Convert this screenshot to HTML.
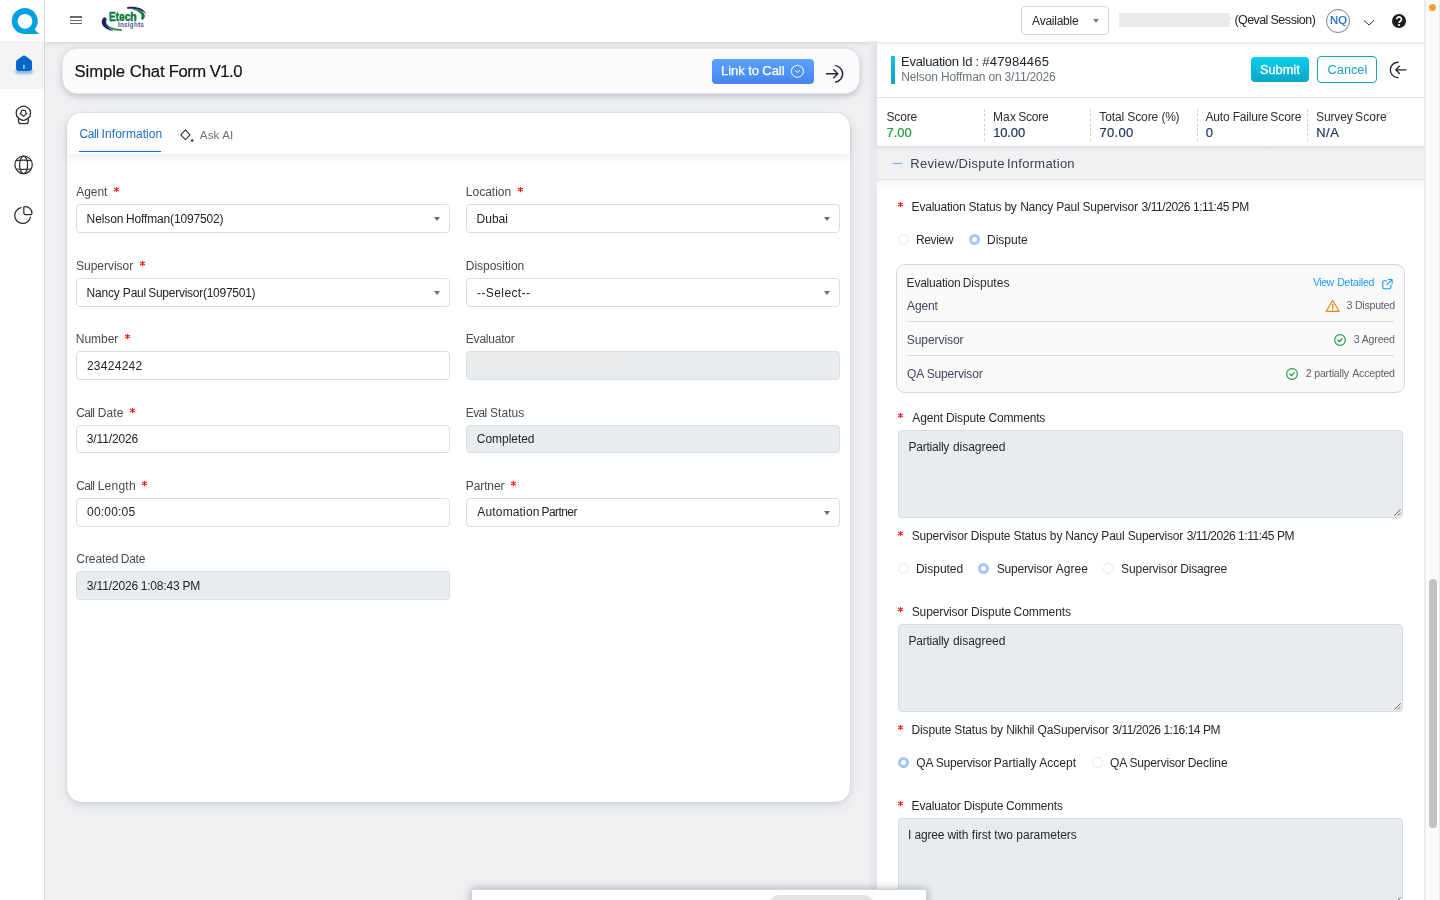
<!DOCTYPE html>
<html lang="en">
<head>
<meta charset="utf-8">
<title>Simple Chat Form V1.0</title>
<style>
*{box-sizing:border-box;margin:0;padding:0}
html,body{width:1440px;height:900px;overflow:hidden}
body{position:relative;background:#eff0f2;font-family:"Liberation Sans",sans-serif;font-size:12px;color:#212529}
.a{position:absolute}
svg{position:absolute;overflow:visible}
.t{position:absolute;white-space:nowrap}
/* sidebar */
#side{left:0;top:0;width:45px;height:900px;background:#fff;border-right:1px solid #d3d9e0}
#side .act{left:0;top:41px;width:44px;height:48.4px;background:#f4f4f5}
/* header */
#hdr{left:45px;top:0;width:1379px;height:42px;background:#fff;box-shadow:0 1px 5px rgba(60,70,90,.20)}
/* scrollbar */
#sb{left:1424px;top:0;width:16px;height:900px;background:#fafafa;border-left:2px solid #ebebeb;border-right:1px solid #ececec}
#sb .th{left:3px;top:579px;width:8px;height:249px;border-radius:4px;background:#c1c1c1}
/* left */
#title{left:62px;top:48px;width:798px;height:46px;background:#fcfcfd;border:1px solid #e4e8ed;border-radius:15px;box-shadow:0 2px 5px rgba(60,70,80,.20),0 4px 12px rgba(60,70,80,.07)}
#card{left:67px;top:113px;width:783px;height:689px;background:#fff;border-radius:15px;box-shadow:0 0 0 1px rgba(200,210,220,.35),0 2px 5px rgba(60,70,80,.10),0 4px 14px rgba(60,70,80,.07)}
#tabs{left:0;top:0;width:783px;height:40.5px;background:#fff;border-radius:15px 15px 0 0;box-shadow:0 5px 9px rgba(60,70,90,.075)}
.box{position:absolute;height:28.6px;width:374px;border:1px solid #d9dee4;border-radius:4px;background:#fff}
.box.dis{background:#e9ecef}
.car{position:absolute;width:0;height:0;border-left:3px solid transparent;border-right:3px solid transparent;border-top:4px solid #6c6c6c}
/* right */
#gut{left:867.5px;top:41px;width:9.5px;height:859px;background:linear-gradient(to right,rgba(232,234,238,0),#e8eaee 28%,#e6e8ec)}
#rp{left:877px;top:41px;width:547px;height:859px;background:#fff}
#rph{left:877px;top:41px;width:547px;height:105px;background:#fff;box-shadow:0 3px 6px rgba(60,70,90,.10)}
#sec{left:877px;top:146px;width:547px;height:33.5px;background:#f0f1f3;border-bottom:1px solid #dfe3e8}
.ta{position:absolute;left:898px;width:505px;background:#e9ecef;border:1px solid #d6dbe0;border-radius:4px}
.rad{position:absolute;width:11px;height:11px;border-radius:50%;border:1px solid #e5e9f1;background:#fff}
.rad.on{border:3px solid #a3c6f8;background:#fff}
.hl{position:absolute;left:907px;width:487px;height:1px;background:#d9dce3}
.vd{position:absolute;top:109px;width:0;height:32px;border-left:1px dashed #cfd6de}
</style>
</head>
<body>
<!-- base panels -->
<div id="hdr" class="a"></div>
<div id="side" class="a"><div class="act a"></div></div>
<div id="title" class="a"></div>
<div id="card" class="a"><div id="tabs" class="a"></div></div>
<div id="gut" class="a"></div>
<div id="rp" class="a"></div>

<!-- sidebar icons -->
<svg style="left:0;top:0" width="45" height="240" viewBox="0 0 45 240">
  <!-- Q logo -->
  <path fill="#00a0e4" fill-rule="evenodd" d="M24.8 8 a13 13 0 1 0 0 26 H39 L34.6 29.4 A13 13 0 0 0 24.8 8 Z M25 13.9 a7.4 7.4 0 1 1 0 14.8 a7.4 7.4 0 1 1 0 -14.8 Z"/>
  <!-- home -->
  <defs><filter id="hs" x="-50%" y="-50%" width="200%" height="200%"><feGaussianBlur stdDeviation="1.6"/></filter></defs>
  <rect x="15" y="69.5" width="18" height="4" rx="2" fill="#0566c9" opacity=".5" filter="url(#hs)"/>
  <path fill="#0566c9" d="M21.9 56.4 a3.4 3.4 0 0 1 4.2 0 l4.9 3.7 a2.6 2.6 0 0 1 1 2.1 v6.1 a2.7 2.7 0 0 1 -2.7 2.7 h-10.6 a2.7 2.7 0 0 1 -2.7 -2.7 v-6.1 a2.6 2.6 0 0 1 1 -2.1 Z"/>
  <rect x="23.05" y="64.8" width="1.65" height="4" rx=".5" fill="#a9cdf2"/>
  <!-- agent / badge icon -->
  <g fill="none" stroke="#2d2d2d" stroke-width="1.3" stroke-linejoin="round" stroke-linecap="round">
    <path d="M20.90 106.78 Q23.40 105.30 25.90 106.78 L28.00 108.02 Q30.50 109.50 30.50 112.40 L30.50 114.10 Q30.50 117.00 27.97 118.42 L25.93 119.58 Q23.40 121.00 20.87 119.58 L18.83 118.42 Q16.30 117.00 16.30 114.10 L16.30 112.40 Q16.30 109.50 18.80 108.02 Z"/>
    <path d="M18.5 118.8 v2.5 a2.3 2.3 0 0 0 2.3 2.3 h5.2 a2.3 2.3 0 0 0 2.3 -2.3 v-2.5"/>
    <path d="M21.6 110.4 h3.6 l.5 2.3 l1.1 .9 l-3.4 2.7 l-3.4 -2.7 l1.1 -.9 Z" stroke-width="1.15"/>
  </g>
  <!-- globe -->
  <g fill="none" stroke="#2d2d2d" stroke-width="1.25">
    <circle cx="23.6" cy="164.8" r="8.7"/>
    <ellipse cx="23.6" cy="164.8" rx="4" ry="8.7"/>
    <path d="M15.9 160.6 Q23.6 159.8 31.3 160.6 M15.9 169 Q23.6 169.8 31.3 169"/>
  </g>
  <!-- pie -->
  <g fill="none" stroke="#2d2d2d" stroke-width="1.25" stroke-linecap="round" stroke-linejoin="round">
    <path d="M21.2 207.6 A8 8 0 1 0 30.5 217.2"/>
    <path d="M24.7 206.6 a6.6 6.6 0 0 1 7.2 7.2 a.9 .9 0 0 1 -.9 .8 h-5 a2.2 2.2 0 0 1 -2.2 -2.2 v-5 a.9 .9 0 0 1 .9 -.8 Z"/>
  </g>
</svg>

<!-- header: hamburger + logo -->
<div class="a" style="left:69.7px;top:16.3px;width:12.6px;height:1.4px;background:#6a6a6a"></div>
<div class="a" style="left:69.7px;top:19.5px;width:12.6px;height:1.4px;background:#6a6a6a"></div>
<div class="a" style="left:69.7px;top:22.7px;width:12.6px;height:1.4px;background:#6a6a6a"></div>
<svg style="left:96px;top:0" width="60" height="40" viewBox="0 0 60 40">
  <path d="M30.9 7.2 C38.6 5.9 48.6 7.8 50.1 14.6 C47.9 11 42 8.4 31.5 8.9 Z" fill="#231f63"/>
  <path d="M35.4 9 C43 8.9 48.4 11.6 48.8 15.6 C48.9 17.6 48 19 46.8 20 L44.8 18.5 C46.6 15.8 45.8 11.6 35.4 9 Z" fill="#0f7d3c"/>
  <path d="M8.3 17.1 L10.9 19.1 C8.6 22.6 10.8 28 17.6 30.8 C9.4 30.4 3.6 24.6 6.4 19 Z" fill="#231f63"/>
  <path d="M10.7 21.8 C10.7 26.4 17.4 29.2 25.7 28.9 L25.9 30.8 C16.6 31.2 9.4 27.6 10.7 21.8 Z" fill="#1c8a48"/>
</svg>
<span class="t" style="left:108.9px;top:8.7px;font-size:13.3px;line-height:16px;font-weight:bold;color:#0a7836;-webkit-text-stroke:.55px #0a7836;transform-origin:0 0;transform:scaleX(.765);will-change:transform">Etech</span>
<span class="t" style="left:117.8px;top:20.3px;font-size:7.5px;line-height:9px;font-weight:bold;color:#4d4d8e;letter-spacing:.3px;transform-origin:0 0;transform:scaleX(.84);will-change:transform">Insights</span>

<!-- header right -->
<div class="a" style="left:1021px;top:6px;width:87.5px;height:28.5px;border:1px solid #d3d9e0;border-radius:4px;background:#fff"></div>
<i class="car" style="left:1092.8px;top:19px;border-top-color:#808080"></i>
<div class="a" style="left:1118.5px;top:13px;width:111px;height:14px;background:#ebebeb"></div>
<div class="a" style="left:1229.6px;top:17.6px;width:1.6px;height:1.4px;background:#777;border-radius:0 1px 0 0;opacity:.55"></div>
<div class="a" style="left:1325.8px;top:8.8px;width:24px;height:24px;border-radius:50%;border:1px solid #7d7d7d;background:#fff"></div>
<svg style="left:1362px;top:17px" width="14" height="10" viewBox="0 0 14 10"><path d="M2.3 3.7 L7 8 L11.7 3.7" fill="none" stroke="#333" stroke-width="1" stroke-linecap="round" stroke-linejoin="round"/></svg>
<svg style="left:1391px;top:13px" width="16" height="16" viewBox="0 0 16 16"><circle cx="8" cy="8" r="7" fill="#1e1e1e"/><path d="M5.7 6.3 a2.35 2.35 0 1 1 3.6 2 c-.8 .5 -1.2 .9 -1.2 1.7" fill="none" stroke="#fff" stroke-width="1.7"/><circle cx="8.05" cy="12" r="1.05" fill="#fff"/></svg>

<!-- title bar widgets -->
<div class="a" style="left:712px;top:59.2px;width:102px;height:24.6px;border-radius:4px;background:linear-gradient(#5ca2ff,#4285ee)"></div>
<svg style="left:790px;top:64.3px" width="15" height="15" viewBox="0 0 15 15" fill="none" stroke="#fff" stroke-width="1"><circle cx="7.4" cy="7.3" r="6"/><path d="M5.2 6.5 L7.4 8.6 L9.6 6.5" stroke-linecap="round" stroke-linejoin="round"/></svg>
<svg style="left:825px;top:63px" width="21" height="21" viewBox="0 0 21 21" fill="none" stroke="#1d2433" stroke-width="1.45" stroke-linecap="round" stroke-linejoin="round"><path d="M1.6 10.8 H12.6 M8.8 6.8 L12.8 10.8 L8.8 14.8"/><path d="M10.6 2.6 A8.3 8.3 0 0 1 10.6 19"/></svg>

<!-- tabs -->
<div class="a" style="left:79px;top:150.6px;width:82px;height:1.6px;background:#1a6dd1"></div>
<svg style="left:178px;top:127px" width="18" height="17" viewBox="0 0 18 17"><path d="M7.4 2.9 L12 7.8 L7.4 12.7 L2.8 7.8 Z" fill="none" stroke="#333" stroke-width="1.1" stroke-linejoin="round"/><path d="M14.1 11.9 L15.8 13.6 L14.1 15.3 L12.4 13.6 Z" fill="#3a3a3a"/></svg>

<!-- form boxes -->
<div class="box" style="left:76px;top:204px"></div><i class="car" style="left:434px;top:216.8px"></i>
<div class="box" style="left:76px;top:278px"></div><i class="car" style="left:434px;top:290.8px"></i>
<div class="box" style="left:76px;top:351.3px"></div>
<div class="box" style="left:76px;top:424.8px"></div>
<div class="box" style="left:76px;top:498px"></div>
<div class="box dis" style="left:76px;top:571.3px"></div>
<div class="box" style="left:466px;top:204px"></div><i class="car" style="left:824px;top:216.8px"></i>
<div class="box" style="left:466px;top:278px"></div><i class="car" style="left:824px;top:290.8px"></i>
<div class="box dis" style="left:466px;top:351.3px"></div>
<div class="box dis" style="left:466px;top:424.8px"></div>
<div class="box" style="left:466px;top:498px"></div><i class="car" style="left:824px;top:510.8px"></i>
<div class="a" style="left:473.7px;top:354.5px;width:154.5px;height:16.8px;background:#ebebeb"></div>

<!-- right panel header -->
<div id="rph" class="a"></div>
<div class="a" style="left:877px;top:42px;width:547px;height:5px;background:linear-gradient(rgba(60,70,90,.13),rgba(60,70,90,.04) 55%,rgba(60,70,90,0))"></div>
<div class="a" style="left:877px;top:97px;width:547px;height:1px;background:#dde2e8"></div>
<div class="a" style="left:890.8px;top:55.8px;width:4.3px;height:28px;background:linear-gradient(#05c8ea,#129fbd)"></div>
<div class="a" style="left:1251px;top:57px;width:57.5px;height:24.8px;border-radius:4px;background:linear-gradient(#03d0f0,#0aa6c6)"></div>
<div class="a" style="left:1317px;top:56.4px;width:59.6px;height:26.2px;border-radius:4px;border:1px solid #17a2c4;background:#fff"></div>
<svg style="left:1387.8px;top:59.9px" width="20.4" height="20.4" viewBox="0 0 22 22" fill="none" stroke="#1d2433" stroke-width="1.45" stroke-linecap="round" stroke-linejoin="round"><path d="M19.4 10.6 H8.6 M12.4 6.8 L8.4 10.6 L12.4 14.6"/><path d="M10.8 2.4 A8.3 8.3 0 0 0 10.8 19"/></svg>
<i class="vd" style="left:984.2px"></i><i class="vd" style="left:1090.3px"></i><i class="vd" style="left:1197.3px"></i><i class="vd" style="left:1307.2px"></i>
<div id="sec" class="a"></div>
<div class="a" style="left:877px;top:146px;width:547px;height:5px;background:linear-gradient(rgba(60,70,90,.11),rgba(60,70,90,.03) 60%,rgba(60,70,90,0))"></div>
<div class="a" style="left:892.5px;top:162.6px;width:9px;height:1.5px;background:#6aa5fd"></div>
<div class="a" style="left:877px;top:180px;width:547px;height:14px;background:linear-gradient(rgba(60,70,90,.05),rgba(60,70,90,0))"></div>

<!-- right panel body shapes -->
<i class="rad" style="left:898px;top:234.3px"></i><i class="rad on" style="left:969px;top:234.3px"></i>
<div class="a" style="left:896px;top:264px;width:509px;height:128.6px;border:1px solid #d3d7de;border-radius:9px;background:#fafafb"></div>
<i class="hl" style="top:321px"></i><i class="hl" style="top:355px"></i>
<svg style="left:1380.9px;top:277.5px" width="12.6" height="12.6" viewBox="0 0 14 14" fill="none" stroke="#1a9cf0" stroke-width="1.25" stroke-linecap="round" stroke-linejoin="round"><path d="M6.2 3 H3.6 A1.6 1.6 0 0 0 2 4.6 V10.4 A1.6 1.6 0 0 0 3.6 12 H9.4 A1.6 1.6 0 0 0 11 10.4 V7.8"/><path d="M8.2 1.6 H12.4 V5.8 M12.2 1.8 L6.6 7.4"/></svg>
<svg style="left:1325px;top:299px" width="16" height="14" viewBox="0 0 16 14" fill="none" stroke="#e08a1a" stroke-width="1.1" stroke-linejoin="round" stroke-linecap="round"><path d="M7.7 1.4 L14.2 12.4 H1.2 Z"/><path d="M7.7 5.4 V9 M7.7 10.6 V10.7" stroke-width="1.35"/></svg>
<svg style="left:1333px;top:333.4px" width="14" height="14" viewBox="0 0 14 14" fill="none" stroke="#1f9d45" stroke-width="1.15" stroke-linecap="round" stroke-linejoin="round"><circle cx="7" cy="7" r="5.35"/><path d="M4.9 7.2 L6.4 8.6 L9.1 5.8" stroke-width="1.3"/></svg>
<svg style="left:1284.6px;top:367.2px" width="14" height="14" viewBox="0 0 14 14" fill="none" stroke="#1f9d45" stroke-width="1.15" stroke-linecap="round" stroke-linejoin="round"><circle cx="7" cy="7" r="5.35"/><path d="M4.9 7.2 L6.4 8.6 L9.1 5.8" stroke-width="1.3"/></svg>
<div class="ta" style="top:430px;height:87.5px"></div>
<div class="ta" style="top:624.2px;height:87.5px"></div>
<div class="ta" style="top:818.2px;height:87.5px"></div>
<svg style="left:1390px;top:505px" width="12" height="12" viewBox="0 0 12 12" stroke="#555" stroke-width=".9"><path d="M4.4 10.6 L10.6 4.4 M7.7 10.6 L10.6 7.7"/></svg>
<svg style="left:1390px;top:699.2px" width="12" height="12" viewBox="0 0 12 12" stroke="#555" stroke-width=".9"><path d="M4.4 10.6 L10.6 4.4 M7.7 10.6 L10.6 7.7"/></svg>
<svg style="left:1390px;top:893.2px" width="12" height="12" viewBox="0 0 12 12" stroke="#555" stroke-width=".9"><path d="M4.4 10.6 L10.6 4.4 M7.7 10.6 L10.6 7.7"/></svg>
<i class="rad" style="left:898px;top:563.3px"></i><i class="rad on" style="left:978px;top:563.3px"></i><i class="rad" style="left:1103px;top:563.3px"></i>
<i class="rad on" style="left:898px;top:757px"></i><i class="rad" style="left:1092px;top:757px"></i>

<!-- bottom popup fragment -->
<div class="a" style="left:471px;top:888.6px;width:455.6px;height:20px;background:#fff;border:1px solid #d9cfdb;border-bottom:0;box-shadow:0 0 9px rgba(40,40,60,.35)"></div>
<div class="a" style="left:769.4px;top:894.7px;width:104.6px;height:30px;border-radius:10px;background:#e4e4e4"></div>

<!-- texts -->
<div class="a" style="left:0;top:0;width:1440px;height:900px;will-change:transform">
<span class="t" style="left:1032.10px;top:12.50px;font-size:12px;line-height:17px;height:17px;color:#212529;letter-spacing:-0.247px;">Available</span>
<span class="t" style="left:1234.44px;top:11.00px;font-size:12.5px;line-height:18px;height:18px;color:#212529;letter-spacing:-0.582px;">(Qeval</span>
<span class="t" style="left:1270.44px;top:11.00px;font-size:12.5px;line-height:18px;height:18px;color:#212529;letter-spacing:-0.437px;">Session)</span>
<span class="t" style="left:1329.88px;top:12.00px;font-size:11.3px;line-height:16px;height:16px;color:#0f64cc;letter-spacing:0.138px;-webkit-text-stroke:.15px #0f64cc">NQ</span>
<span class="t" style="left:74.41px;top:60.00px;font-size:16.7px;line-height:23px;height:23px;color:#0f1216;letter-spacing:-0.058px;-webkit-text-stroke:.2px #0f1216">Simple Chat</span>
<span class="t" style="left:168.74px;top:60.00px;font-size:16.7px;line-height:23px;height:23px;color:#0f1216;letter-spacing:-0.518px;-webkit-text-stroke:.2px #0f1216">Form V1.0</span>
<span class="t" style="left:721.08px;top:61.50px;font-size:13px;line-height:18px;height:18px;color:#fff;letter-spacing:-0.049px;-webkit-text-stroke:.25px #fff">Link to</span>
<span class="t" style="left:762.32px;top:61.50px;font-size:13px;line-height:18px;height:18px;color:#fff;letter-spacing:-0.037px;-webkit-text-stroke:.25px #fff">Call</span>
<span class="t" style="left:79.56px;top:125.50px;font-size:12px;line-height:17px;height:17px;color:#1a6dd1;letter-spacing:-0.441px;">Call</span>
<span class="t" style="left:101.62px;top:125.50px;font-size:12px;line-height:17px;height:17px;color:#1a6dd1;letter-spacing:0.058px;">Information</span>
<span class="t" style="left:199.78px;top:127.00px;font-size:11.6px;line-height:16px;height:16px;color:#6b7082;letter-spacing:0.140px;">Ask AI</span>
<span class="t" style="left:76.36px;top:183.50px;font-size:12px;line-height:17px;height:17px;color:#46494e;letter-spacing:-0.090px;">Agent</span>
<span class="t" style="left:86.61px;top:210.50px;font-size:12px;line-height:17px;height:17px;color:#212529;letter-spacing:-0.083px;">Nelson</span>
<span class="t" style="left:126.05px;top:210.50px;font-size:12px;line-height:17px;height:17px;color:#212529;letter-spacing:-0.159px;">Hoffman(1097502)</span>
<span class="t" style="left:76.11px;top:257.50px;font-size:12px;line-height:17px;height:17px;color:#46494e;letter-spacing:-0.029px;">Supervisor</span>
<span class="t" style="left:86.61px;top:284.50px;font-size:12px;line-height:17px;height:17px;color:#212529;letter-spacing:-0.190px;">Nancy Paul</span>
<span class="t" style="left:148.19px;top:284.50px;font-size:12px;line-height:17px;height:17px;color:#212529;letter-spacing:-0.261px;">Supervisor(1097501)</span>
<span class="t" style="left:75.83px;top:330.50px;font-size:12px;line-height:17px;height:17px;color:#46494e;letter-spacing:-0.049px;">Number</span>
<span class="t" style="left:86.88px;top:357.50px;font-size:12px;line-height:17px;height:17px;color:#212529;letter-spacing:0.284px;">23424242</span>
<span class="t" style="left:76.36px;top:404.50px;font-size:12px;line-height:17px;height:17px;color:#46494e;letter-spacing:-0.669px;">Call</span>
<span class="t" style="left:97.70px;top:404.50px;font-size:12px;line-height:17px;height:17px;color:#46494e;letter-spacing:0.145px;">Date</span>
<span class="t" style="left:86.83px;top:430.50px;font-size:12px;line-height:17px;height:17px;color:#212529;letter-spacing:-0.132px;">3/11/2026</span>
<span class="t" style="left:76.36px;top:477.50px;font-size:12px;line-height:17px;height:17px;color:#46494e;letter-spacing:-0.669px;">Call</span>
<span class="t" style="left:97.70px;top:477.50px;font-size:12px;line-height:17px;height:17px;color:#46494e;letter-spacing:0.234px;">Length</span>
<span class="t" style="left:87.06px;top:503.50px;font-size:12px;line-height:17px;height:17px;color:#212529;letter-spacing:0.188px;">00:00:05</span>
<span class="t" style="left:76.36px;top:550.50px;font-size:12px;line-height:17px;height:17px;color:#46494e;letter-spacing:-0.096px;">Created</span>
<span class="t" style="left:120.70px;top:550.50px;font-size:12px;line-height:17px;height:17px;color:#46494e;letter-spacing:-0.204px;">Date</span>
<span class="t" style="left:86.83px;top:577.50px;font-size:12px;line-height:17px;height:17px;color:#212529;letter-spacing:-0.132px;">3/11/2026</span>
<span class="t" style="left:140.74px;top:577.50px;font-size:12px;line-height:17px;height:17px;color:#212529;letter-spacing:-0.194px;">1:08:43 PM</span>
<span class="t" style="left:465.83px;top:183.50px;font-size:12px;line-height:17px;height:17px;color:#46494e;">Location</span>
<span class="t" style="left:476.61px;top:210.50px;font-size:12px;line-height:17px;height:17px;color:#212529;letter-spacing:-0.027px;">Dubai</span>
<span class="t" style="left:465.83px;top:257.50px;font-size:12px;line-height:17px;height:17px;color:#46494e;letter-spacing:-0.033px;">Disposition</span>
<span class="t" style="left:477.06px;top:284.50px;font-size:12px;line-height:17px;height:17px;color:#212529;letter-spacing:0.399px;">--Select--</span>
<span class="t" style="left:465.83px;top:330.50px;font-size:12px;line-height:17px;height:17px;color:#46494e;letter-spacing:-0.220px;">Evaluator</span>
<span class="t" style="left:465.83px;top:404.50px;font-size:12px;line-height:17px;height:17px;color:#46494e;letter-spacing:-0.685px;">Eval</span>
<span class="t" style="left:490.10px;top:404.50px;font-size:12px;line-height:17px;height:17px;color:#46494e;letter-spacing:0.019px;">Status</span>
<span class="t" style="left:476.85px;top:430.50px;font-size:12px;line-height:17px;height:17px;color:#212529;letter-spacing:-0.044px;">Completed</span>
<span class="t" style="left:465.83px;top:477.50px;font-size:12px;line-height:17px;height:17px;color:#46494e;letter-spacing:-0.120px;">Partner</span>
<span class="t" style="left:477.34px;top:503.50px;font-size:12px;line-height:17px;height:17px;color:#212529;letter-spacing:0.155px;">Automation</span>
<span class="t" style="left:541.62px;top:503.50px;font-size:12px;line-height:17px;height:17px;color:#212529;letter-spacing:-0.597px;">Partner</span>
<span class="t" style="left:901.08px;top:52.50px;font-size:13px;line-height:18px;height:18px;color:#20242c;letter-spacing:-0.308px;">Evaluation Id :</span>
<span class="t" style="left:982.32px;top:52.50px;font-size:13px;line-height:18px;height:18px;color:#20242c;letter-spacing:0.187px;">#47984465</span>
<span class="t" style="left:901.24px;top:68.50px;font-size:12px;line-height:17px;height:17px;color:#6b7280;letter-spacing:-0.131px;">Nelson Hoffman on</span>
<span class="t" style="left:1004.61px;top:68.50px;font-size:12px;line-height:17px;height:17px;color:#6b7280;letter-spacing:-0.167px;">3/11/2026</span>
<span class="t" style="left:1260.04px;top:60.50px;font-size:12.8px;line-height:18px;height:18px;color:#fff;letter-spacing:-0.032px;-webkit-text-stroke:.32px #fff">Submit</span>
<span class="t" style="left:1327.62px;top:60.50px;font-size:12.8px;line-height:18px;height:18px;color:#17a2c4;letter-spacing:-0.033px;">Cancel</span>
<span class="t" style="left:886.47px;top:108.50px;font-size:12px;line-height:17px;height:17px;color:#2b2f36;letter-spacing:-0.151px;">Score</span>
<span class="t" style="left:886.61px;top:123.50px;font-size:13px;line-height:18px;height:18px;color:#1b9e3e;letter-spacing:-0.041px;-webkit-text-stroke:.18px #1b9e3e">7.00</span>
<span class="t" style="left:992.98px;top:108.50px;font-size:12px;line-height:17px;height:17px;color:#2b2f36;letter-spacing:0.155px;">Max</span>
<span class="t" style="left:1018.19px;top:108.50px;font-size:12px;line-height:17px;height:17px;color:#2b2f36;letter-spacing:-0.229px;">Score</span>
<span class="t" style="left:993.19px;top:123.50px;font-size:13px;line-height:18px;height:18px;color:#1d3461;letter-spacing:-0.150px;-webkit-text-stroke:.18px #1d3461">10.00</span>
<span class="t" style="left:1099.36px;top:108.50px;font-size:12px;line-height:17px;height:17px;color:#2b2f36;letter-spacing:-0.120px;">Total Score</span>
<span class="t" style="left:1161.40px;top:108.50px;font-size:12px;line-height:17px;height:17px;color:#2b2f36;letter-spacing:-0.237px;">(%)</span>
<span class="t" style="left:1099.52px;top:123.50px;font-size:13px;line-height:18px;height:18px;color:#1d3461;letter-spacing:0.316px;-webkit-text-stroke:.18px #1d3461">70.00</span>
<span class="t" style="left:1205.56px;top:108.50px;font-size:12px;line-height:17px;height:17px;color:#2b2f36;letter-spacing:-0.186px;">Auto Failure</span>
<span class="t" style="left:1270.28px;top:108.50px;font-size:12px;line-height:17px;height:17px;color:#2b2f36;letter-spacing:-0.066px;">Score</span>
<span class="t" style="left:1205.82px;top:123.50px;font-size:13px;line-height:18px;height:18px;color:#1d3461;-webkit-text-stroke:.18px #1d3461">0</span>
<span class="t" style="left:1316.12px;top:108.50px;font-size:12px;line-height:17px;height:17px;color:#2b2f36;letter-spacing:-0.160px;">Survey</span>
<span class="t" style="left:1355.12px;top:108.50px;font-size:12px;line-height:17px;height:17px;color:#2b2f36;letter-spacing:0.053px;">Score</span>
<span class="t" style="left:1316.14px;top:123.50px;font-size:13px;line-height:18px;height:18px;color:#1d3461;letter-spacing:0.548px;-webkit-text-stroke:.18px #1d3461">N/A</span>
<span class="t" style="left:910.31px;top:154.50px;font-size:13px;line-height:18px;height:18px;color:#3a3f55;letter-spacing:0.290px;">Review/Dispute</span>
<span class="t" style="left:1007.01px;top:154.50px;font-size:13px;line-height:18px;height:18px;color:#3a3f55;letter-spacing:0.257px;">Information</span>
<span class="t" style="left:911.61px;top:198.50px;font-size:12px;line-height:17px;height:17px;color:#24282f;letter-spacing:-0.219px;">Evaluation Status by</span>
<span class="t" style="left:1020.14px;top:198.50px;font-size:12px;line-height:17px;height:17px;color:#24282f;letter-spacing:-0.206px;">Nancy Paul Supervisor</span>
<span class="t" style="left:1141.61px;top:198.50px;font-size:12px;line-height:17px;height:17px;color:#24282f;letter-spacing:-0.450px;">3/11/2026 1:11:45 PM</span>
<span class="t" style="left:915.98px;top:231.50px;font-size:12px;line-height:17px;height:17px;color:#24282f;letter-spacing:-0.358px;">Review</span>
<span class="t" style="left:987.05px;top:231.50px;font-size:12px;line-height:17px;height:17px;color:#24282f;letter-spacing:-0.016px;">Dispute</span>
<span class="t" style="left:906.61px;top:274.50px;font-size:12px;line-height:17px;height:17px;color:#2a2e3a;letter-spacing:-0.228px;">Evaluation</span>
<span class="t" style="left:962.70px;top:274.50px;font-size:12px;line-height:17px;height:17px;color:#2a2e3a;">Disputes</span>
<span class="t" style="left:907.10px;top:297.50px;font-size:12px;line-height:17px;height:17px;color:#40455e;letter-spacing:-0.147px;">Agent</span>
<span class="t" style="left:906.69px;top:331.50px;font-size:12px;line-height:17px;height:17px;color:#40455e;letter-spacing:-0.050px;">Supervisor</span>
<span class="t" style="left:907.06px;top:365.50px;font-size:12px;line-height:17px;height:17px;color:#40455e;letter-spacing:-0.140px;">QA Supervisor</span>
<span class="t" style="left:1312.99px;top:274.50px;font-size:10.6px;line-height:15px;height:15px;color:#1a9cf0;letter-spacing:-0.499px;">View</span>
<span class="t" style="left:1337.15px;top:274.50px;font-size:10.6px;line-height:15px;height:15px;color:#1a9cf0;letter-spacing:-0.219px;">Detailed</span>
<span class="t" style="left:1346.62px;top:297.50px;font-size:10.6px;line-height:15px;height:15px;color:#5a5f6b;letter-spacing:-0.242px;">3 Disputed</span>
<span class="t" style="left:1353.73px;top:331.50px;font-size:10.6px;line-height:15px;height:15px;color:#5a5f6b;letter-spacing:-0.165px;">3 Agreed</span>
<span class="t" style="left:1305.72px;top:365.50px;font-size:10.6px;line-height:15px;height:15px;color:#5a5f6b;letter-spacing:-0.189px;">2 partially</span>
<span class="t" style="left:1352.16px;top:365.50px;font-size:10.6px;line-height:15px;height:15px;color:#5a5f6b;letter-spacing:-0.188px;">Accepted</span>
<span class="t" style="left:912.34px;top:409.50px;font-size:12px;line-height:17px;height:17px;color:#24282f;letter-spacing:-0.161px;">Agent Dispute</span>
<span class="t" style="left:988.61px;top:409.50px;font-size:12px;line-height:17px;height:17px;color:#24282f;letter-spacing:-0.191px;">Comments</span>
<span class="t" style="left:908.43px;top:438.50px;font-size:12px;line-height:17px;height:17px;color:#24282f;letter-spacing:-0.219px;">Partially</span>
<span class="t" style="left:952.89px;top:438.50px;font-size:12px;line-height:17px;height:17px;color:#24282f;letter-spacing:-0.023px;">disagreed</span>
<span class="t" style="left:911.69px;top:527.50px;font-size:12px;line-height:17px;height:17px;color:#24282f;letter-spacing:-0.150px;">Supervisor Dispute Status by</span>
<span class="t" style="left:1065.14px;top:527.50px;font-size:12px;line-height:17px;height:17px;color:#24282f;letter-spacing:-0.192px;">Nancy Paul Supervisor</span>
<span class="t" style="left:1186.76px;top:527.50px;font-size:12px;line-height:17px;height:17px;color:#24282f;letter-spacing:-0.453px;">3/11/2026 1:11:45 PM</span>
<span class="t" style="left:915.98px;top:560.50px;font-size:12px;line-height:17px;height:17px;color:#24282f;letter-spacing:-0.019px;">Disputed</span>
<span class="t" style="left:996.64px;top:560.50px;font-size:12px;line-height:17px;height:17px;color:#24282f;letter-spacing:-0.162px;">Supervisor</span>
<span class="t" style="left:1055.82px;top:560.50px;font-size:12px;line-height:17px;height:17px;color:#24282f;letter-spacing:0.011px;">Agree</span>
<span class="t" style="left:1121.10px;top:560.50px;font-size:12px;line-height:17px;height:17px;color:#24282f;letter-spacing:-0.103px;">Supervisor</span>
<span class="t" style="left:1180.14px;top:560.50px;font-size:12px;line-height:17px;height:17px;color:#24282f;letter-spacing:-0.150px;">Disagree</span>
<span class="t" style="left:911.69px;top:603.50px;font-size:12px;line-height:17px;height:17px;color:#24282f;letter-spacing:-0.115px;">Supervisor Dispute</span>
<span class="t" style="left:1013.61px;top:603.50px;font-size:12px;line-height:17px;height:17px;color:#24282f;letter-spacing:-0.091px;">Comments</span>
<span class="t" style="left:908.43px;top:632.50px;font-size:12px;line-height:17px;height:17px;color:#24282f;letter-spacing:-0.219px;">Partially</span>
<span class="t" style="left:952.89px;top:632.50px;font-size:12px;line-height:17px;height:17px;color:#24282f;letter-spacing:-0.023px;">disagreed</span>
<span class="t" style="left:911.61px;top:721.50px;font-size:12px;line-height:17px;height:17px;color:#24282f;letter-spacing:-0.163px;">Dispute Status by</span>
<span class="t" style="left:1006.14px;top:721.50px;font-size:12px;line-height:17px;height:17px;color:#24282f;letter-spacing:-0.187px;">Nikhil QaSupervisor</span>
<span class="t" style="left:1112.36px;top:721.50px;font-size:12px;line-height:17px;height:17px;color:#24282f;letter-spacing:-0.481px;">3/11/2026 1:16:14 PM</span>
<span class="t" style="left:916.26px;top:754.50px;font-size:12px;line-height:17px;height:17px;color:#24282f;letter-spacing:-0.187px;">QA Supervisor</span>
<span class="t" style="left:993.70px;top:754.50px;font-size:12px;line-height:17px;height:17px;color:#24282f;letter-spacing:0.018px;">Partially Accept</span>
<span class="t" style="left:1110.06px;top:754.50px;font-size:12px;line-height:17px;height:17px;color:#24282f;letter-spacing:-0.180px;">QA Supervisor</span>
<span class="t" style="left:1187.70px;top:754.50px;font-size:12px;line-height:17px;height:17px;color:#24282f;letter-spacing:-0.016px;">Decline</span>
<span class="t" style="left:911.61px;top:797.50px;font-size:12px;line-height:17px;height:17px;color:#24282f;letter-spacing:-0.183px;">Evaluator Dispute</span>
<span class="t" style="left:1006.11px;top:797.50px;font-size:12px;line-height:17px;height:17px;color:#24282f;letter-spacing:-0.158px;">Comments</span>
<span class="t" style="left:908.11px;top:826.50px;font-size:12px;line-height:17px;height:17px;color:#24282f;letter-spacing:-0.164px;">I agree with</span>
<span class="t" style="left:971.82px;top:826.50px;font-size:12px;line-height:17px;height:17px;color:#24282f;letter-spacing:-0.017px;">first two parameters</span>
<svg style="left:112.90px;top:186.10px" width="7" height="7" viewBox="-3.5 -3.5 7 7"><path d="M0 -2.15V2.15M-2.1 -1.2L2.1 1.2M-2.1 1.2L2.1 -1.2" stroke="#ff1515" stroke-width="1.05" stroke-linecap="round" fill="none"/></svg>
<svg style="left:138.70px;top:259.90px" width="7" height="7" viewBox="-3.5 -3.5 7 7"><path d="M0 -2.15V2.15M-2.1 -1.2L2.1 1.2M-2.1 1.2L2.1 -1.2" stroke="#ff1515" stroke-width="1.05" stroke-linecap="round" fill="none"/></svg>
<svg style="left:124.20px;top:332.90px" width="7" height="7" viewBox="-3.5 -3.5 7 7"><path d="M0 -2.15V2.15M-2.1 -1.2L2.1 1.2M-2.1 1.2L2.1 -1.2" stroke="#ff1515" stroke-width="1.05" stroke-linecap="round" fill="none"/></svg>
<svg style="left:129.20px;top:406.65px" width="7" height="7" viewBox="-3.5 -3.5 7 7"><path d="M0 -2.15V2.15M-2.1 -1.2L2.1 1.2M-2.1 1.2L2.1 -1.2" stroke="#ff1515" stroke-width="1.05" stroke-linecap="round" fill="none"/></svg>
<svg style="left:140.95px;top:479.90px" width="7" height="7" viewBox="-3.5 -3.5 7 7"><path d="M0 -2.15V2.15M-2.1 -1.2L2.1 1.2M-2.1 1.2L2.1 -1.2" stroke="#ff1515" stroke-width="1.05" stroke-linecap="round" fill="none"/></svg>
<svg style="left:516.70px;top:186.10px" width="7" height="7" viewBox="-3.5 -3.5 7 7"><path d="M0 -2.15V2.15M-2.1 -1.2L2.1 1.2M-2.1 1.2L2.1 -1.2" stroke="#ff1515" stroke-width="1.05" stroke-linecap="round" fill="none"/></svg>
<svg style="left:509.90px;top:479.90px" width="7" height="7" viewBox="-3.5 -3.5 7 7"><path d="M0 -2.15V2.15M-2.1 -1.2L2.1 1.2M-2.1 1.2L2.1 -1.2" stroke="#ff1515" stroke-width="1.05" stroke-linecap="round" fill="none"/></svg>
<svg style="left:897.20px;top:201.15px" width="7" height="7" viewBox="-3.5 -3.5 7 7"><path d="M0 -2.15V2.15M-2.1 -1.2L2.1 1.2M-2.1 1.2L2.1 -1.2" stroke="#ff1515" stroke-width="1.05" stroke-linecap="round" fill="none"/></svg>
<svg style="left:897.20px;top:411.90px" width="7" height="7" viewBox="-3.5 -3.5 7 7"><path d="M0 -2.15V2.15M-2.1 -1.2L2.1 1.2M-2.1 1.2L2.1 -1.2" stroke="#ff1515" stroke-width="1.05" stroke-linecap="round" fill="none"/></svg>
<svg style="left:897.20px;top:529.90px" width="7" height="7" viewBox="-3.5 -3.5 7 7"><path d="M0 -2.15V2.15M-2.1 -1.2L2.1 1.2M-2.1 1.2L2.1 -1.2" stroke="#ff1515" stroke-width="1.05" stroke-linecap="round" fill="none"/></svg>
<svg style="left:897.20px;top:605.65px" width="7" height="7" viewBox="-3.5 -3.5 7 7"><path d="M0 -2.15V2.15M-2.1 -1.2L2.1 1.2M-2.1 1.2L2.1 -1.2" stroke="#ff1515" stroke-width="1.05" stroke-linecap="round" fill="none"/></svg>
<svg style="left:897.20px;top:723.90px" width="7" height="7" viewBox="-3.5 -3.5 7 7"><path d="M0 -2.15V2.15M-2.1 -1.2L2.1 1.2M-2.1 1.2L2.1 -1.2" stroke="#ff1515" stroke-width="1.05" stroke-linecap="round" fill="none"/></svg>
<svg style="left:897.20px;top:799.90px" width="7" height="7" viewBox="-3.5 -3.5 7 7"><path d="M0 -2.15V2.15M-2.1 -1.2L2.1 1.2M-2.1 1.2L2.1 -1.2" stroke="#ff1515" stroke-width="1.05" stroke-linecap="round" fill="none"/></svg>
</div>

<!-- scrollbar -->
<div id="sb" class="a"><div class="th a"></div></div>
<div class="a" style="left:1428.6px;top:4.3px;width:7px;height:7px;border-radius:50%;background:#ff9d2e"></div>
</body>
</html>
